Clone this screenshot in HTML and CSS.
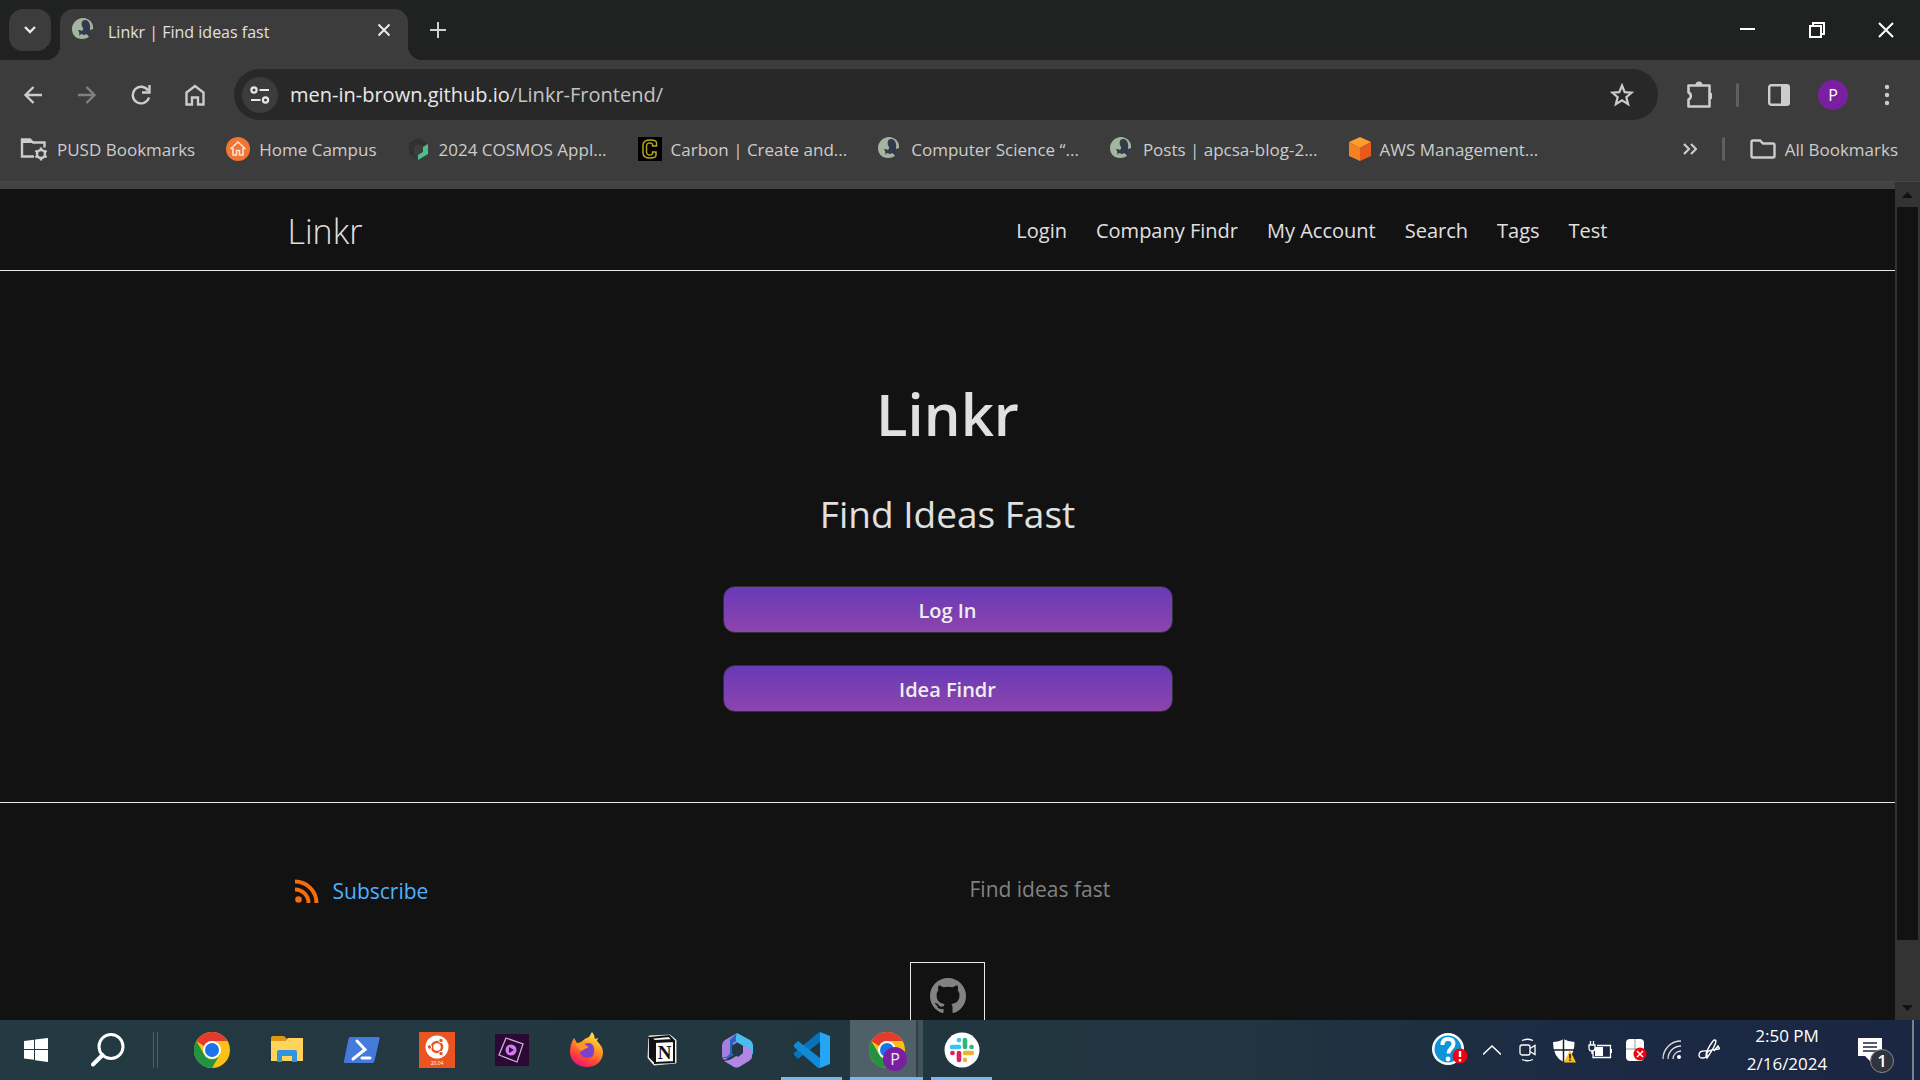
FILE: index.html
```html
<!DOCTYPE html>
<html lang="en">
<head>
<meta charset="utf-8">
<title>Linkr | Find ideas fast</title>
<link rel="stylesheet" href="styles.css">
</head>
<body>
<svg width="0" height="0" class="defs" aria-hidden="true">
  <symbol id="globe" viewBox="0 0 24 24">
    <path fill="#a3b5a1" d="M11 0C5 0 0 5 0 11c0 6 4 10 10 10 3 0 5-1 7-2l-2-3-3 1-3-1-2 2c1-3 0-4-1-6l4 1c2-1 1-3 0-5-1-3 0-6 3-6 4 1 5 6 5 10l3-1C22 5 17 0 11 0z"/>
    <path fill="#313b50" d="M13 2c4 0 6 5 5 9-1 2-1 3 1 6l4 5-6-4-4-3-3 1-4-4 4 1c2-1 2-3 1-5 0-3 0-5 2-6z"/>
  </symbol>
  <symbol id="chrome" viewBox="0 0 36 36">
    <circle cx="18" cy="18" r="18" fill="#fbc116"/>
    <path fill="#e33b2e" d="M2.400 9A18 18 0 0 1 33.600 9H18a9 9 0 0 0-8 5z"/>
    <path fill="#229342" d="M2.400 9A18 18 0 0 0 18 36l8-13.500a9 9 0 0 1-15.800 0z"/>
    <circle cx="18" cy="18" r="9" fill="#fff"/><circle cx="18" cy="18" r="7" fill="#1a73e8"/>
  </symbol>
</svg>

<header class="browser">
  <div class="tabstrip">
    <button class="tab-search" aria-label="Search tabs"><svg width="14" height="10" viewBox="0 0 14 10"><path d="M2 2l5 5 5-5" fill="none" stroke="#e8e8e8" stroke-width="2.400"/></svg></button>
    <div class="tab">
      <svg width="24" height="24"><use href="#globe"/></svg>
      <span class="tab-title">Linkr | Find ideas fast</span>
      <button class="plain" aria-label="Close tab"><svg width="14" height="14" viewBox="0 0 14 14"><path d="M1.500 1.500l11 11m0-11l-11 11" stroke="#e8e8e8" stroke-width="2"/></svg></button>
    </div>
    <button class="plain new-tab" aria-label="New tab"><svg width="16" height="16" viewBox="0 0 16 16"><path d="M8 0v16M0 8h16" stroke="#d0d0d0" stroke-width="2"/></svg></button>
    <div class="window-buttons">
      <button class="plain" aria-label="Minimize"><svg width="16" height="16" viewBox="0 0 16 16"><path d="M0 7h15" stroke="#fff" stroke-width="2"/></svg></button>
      <button class="plain" aria-label="Restore"><svg width="16" height="16" viewBox="0 0 16 16"><path d="M1 4h11v11H1zM4 4V1h11v11h-3" fill="none" stroke="#fff" stroke-width="2"/></svg></button>
      <button class="plain" aria-label="Close"><svg width="16" height="16" viewBox="0 0 16 16"><path d="M1 1l14 14m0-14L1 15" stroke="#fff" stroke-width="2"/></svg></button>
    </div>
  </div>

  <div class="toolbar">
    <nav class="history" aria-label="History">
      <button class="plain" aria-label="Back"><svg width="20" height="20" viewBox="0 0 20 20"><path d="M19 10H3m7.500-8L2.500 10l8 8" fill="none" stroke="#ccc" stroke-width="2.400"/></svg></button>
      <button class="plain" aria-label="Forward"><svg width="20" height="20" viewBox="0 0 20 20"><path d="M1 10h16M9.500 2l8 8-8 8" fill="none" stroke="#808080" stroke-width="2.400"/></svg></button>
      <button class="plain" aria-label="Reload"><svg width="20" height="20" viewBox="0 0 20 20"><path d="M18 12.500A8.300 8.300 0 1 1 17 5.500M18.500 0v7.500H11" fill="none" stroke="#ccc" stroke-width="2.400"/></svg></button>
      <button class="plain" aria-label="Home"><svg width="20" height="22" viewBox="0 0 20 22"><path d="M1.500 8.500L10 2l8.500 6.500v12h-5.500v-7H7v7H1.500z" fill="none" stroke="#ccc" stroke-width="2.400"/></svg></button>
    </nav>
    <div class="omnibox">
      <button class="site-info" aria-label="Site information"><svg width="20" height="18" viewBox="0 0 20 18"><g fill="none" stroke="#e8e8e8" stroke-width="2.200"><circle cx="4" cy="4" r="2.600"/><path d="M9.500 4H19M1 14h9.500"/><circle cx="15.500" cy="14" r="2.600"/></g></svg></button>
      <div class="url" role="textbox" aria-label="Address">men-in-brown.github.io<span>/Linkr-Frontend/</span></div>
      <button class="plain" aria-label="Bookmark this page"><svg width="24" height="24" viewBox="0 0 24 24"><path d="M12 2.500l2.700 6.600 7 .5-5.400 4.500 1.800 7L12 17.300l-6.100 3.800 1.800-7-5.400-4.500 7-.5z" fill="none" stroke="#ccc" stroke-width="2.200"/></svg></button>
    </div>
    <div class="tools">
      <button class="plain" aria-label="Extensions"><svg width="26" height="28" viewBox="0 0 26 28"><path d="M2.500 4.500h21v21h-21v-7a3.800 3.800 0 0 0 0-7z" fill="none" stroke="#ccc" stroke-width="2.600" stroke-linejoin="round" class="puzzle"/><path d="M9.500 4a3.500 3.500 0 0 1 7 0zM23.500 11.500a3.500 3.500 0 0 1 0 7z" fill="#ccc"/></svg></button>
      <i class="divider"></i>
      <button class="plain" aria-label="Side panel"><svg width="22" height="22" viewBox="0 0 22 22"><rect x="1.200" y="1.200" width="19.600" height="19.600" rx="2" fill="none" stroke="#ccc" stroke-width="2.400"/><path d="M13 1h8v20h-8z" fill="#ccc"/></svg></button>
      <button class="avatar" aria-label="Profile">P</button>
      <button class="plain" aria-label="Menu"><svg width="6" height="22" viewBox="0 0 6 22" fill="#ccc"><circle cx="3" cy="3" r="2.200"/><circle cx="3" cy="11" r="2.200"/><circle cx="3" cy="19" r="2.200"/></svg></button>
    </div>
  </div>

  <nav class="bookmarks" aria-label="Bookmarks">
    <a href="#"><svg width="28" height="24" viewBox="0 0 28 24"><path d="M14 19.500H2v-17h8l3 3h11.500v5" fill="none" stroke="#ccc" stroke-width="2.400"/><path d="M2 2h8l3 4H2z" fill="#ccc"/><circle cx="21" cy="17" r="4" fill="none" stroke="#ccc" stroke-width="2.400"/><path d="M21 10.500v3m0 7v3m-5.600-9.700l2.500 1.500m6.200 3.500l2.500 1.500m0-6.500l-2.500 1.500m-6.200 3.500l-2.500 1.500" stroke="#ccc" stroke-width="2.400"/></svg><span>PUSD Bookmarks</span></a>
    <a href="#"><svg width="24" height="24" viewBox="0 0 24 24"><circle cx="12" cy="12" r="12" fill="#f27535"/><path d="M4.500 12L12 5l7.500 7M7 11v7h3.500v-4.500h3V18H17v-7" fill="none" stroke="#ffe5d5" stroke-width="1.500"/></svg><span>Home Campus</span></a>
    <a href="#"><svg width="22" height="24" viewBox="0 0 22 24"><path d="M10 1l9 5-4 3-5-2-4 3v7l4 5-9-5V6z" fill="#2f3232"/><path d="M20 7v10l-10 6v-5l5-3v-5z" fill="#4ac18b"/></svg><span>2024 COSMOS Appl...</span></a>
    <a href="#"><svg width="24" height="24" viewBox="0 0 24 24"><path d="M0 0h24v24H0z"/><path d="M18.500 9V6c0-2-3-3-6-3C7 3 5 5 5 8v8c0 3 2 5 7 5 3 0 6-1 6-3v-3h-3.500v2c-3 2-6 1-6-2V9c0-3 3-4 6-2v2z" fill="none" stroke="#b5a51c" stroke-width="1.500"/></svg><span>Carbon | Create and...</span></a>
    <a href="#"><svg width="24" height="24"><use href="#globe"/></svg><span>Computer Science “...</span></a>
    <a href="#"><svg width="24" height="24"><use href="#globe"/></svg><span>Posts | apcsa-blog-2...</span></a>
    <a href="#"><svg width="22" height="24" viewBox="0 0 22 24"><path d="M11 0l11 5-11 6L0 5z" fill="#ff9f2e"/><path d="M0 5l11 6v13L0 19z" fill="#f58220"/><path d="M22 5l-11 6v13l11-5z" fill="#e85b1c"/></svg><span>AWS Management...</span></a>
    <div class="bookmarks-end">
      <button class="plain" aria-label="More bookmarks"><svg width="14" height="12" viewBox="0 0 14 12"><path d="M1 1l5 5-5 5m7-10l5 5-5 5" fill="none" stroke="#ccc" stroke-width="2.200"/></svg></button>
      <i class="divider"></i>
      <a href="#"><svg width="26" height="20" viewBox="0 0 26 20"><path d="M3 1.500h7l3 3h10q1.500 0 1.500 1.500v11q0 1.500-1.500 1.500H3q-1.500 0-1.500-1.500V3q0-1.500 1.500-1.500z" fill="none" stroke="#ccc" stroke-width="2.400"/></svg><span>All Bookmarks</span></a>
    </div>
  </nav>
</header>

<div class="viewport">
  <div class="page">
    <header class="site-header">
      <div class="wrap">
        <a class="site-title" href="#">Linkr</a>
        <nav class="site-nav"><a href="#">Login</a><a href="#">Company Findr</a><a href="#">My Account</a><a href="#">Search</a><a href="#">Tags</a><a href="#">Test</a></nav>
      </div>
    </header>
    <main class="hero">
      <h1>Linkr</h1>
      <p>Find Ideas Fast</p>
      <button class="cta">Log In</button>
      <button class="cta">Idea Findr</button>
    </main>
    <footer class="site-footer">
      <div class="wrap footer-cols">
        <a class="subscribe" href="#"><svg width="24" height="24" viewBox="0 0 24 24" fill="none" stroke="#f76b0c" stroke-width="4"><circle cx="3.500" cy="20.500" r="3.300" fill="#f76b0c" stroke="none"/><path d="M0 10.500A13.500 13.500 0 0 1 13.500 24M0 2.500A21.500 21.500 0 0 1 21.500 24"/></svg>Subscribe</a>
        <p>Find ideas fast</p>
      </div>
      <a class="github" href="#" aria-label="GitHub"><svg width="36" height="36" viewBox="0 0 16 16"><path fill="#828282" d="M8 0C3.580 0 0 3.580 0 8c0 3.540 2.290 6.530 5.470 7.590.4.070.55-.17.55-.38 0-.19-.01-.82-.01-1.490-2.010.37-2.530-.49-2.690-.94-.09-.23-.48-.94-.82-1.130-.28-.15-.68-.52-.01-.53.63-.01 1.080.58 1.230.82.72 1.210 1.870.87 2.330.66.070-.52.28-.87.51-1.070-1.780-.2-3.640-.89-3.640-3.950 0-.87.31-1.590.82-2.150-.08-.2-.36-1.020.08-2.120 0 0 .67-.21 2.200.82.64-.18 1.320-.27 2-.27s1.360.09 2 .27c1.530-1.040 2.200-.82 2.200-.82.44 1.100.16 1.920.08 2.120.51.56.82 1.270.82 2.150 0 3.070-1.870 3.750-3.650 3.950.29.25.54.73.54 1.480 0 1.070-.01 1.930-.01 2.200 0 .21.15.46.55.38A8.010 8.010 0 0 0 16 8c0-4.420-3.580-8-8-8z"/></svg></a>
    </footer>
  </div>
  <div class="scrollbar" aria-hidden="true">
    <svg width="25" height="25" viewBox="0 0 25 25"><path d="M7 16h11l-5.500-6z" fill="#111"/></svg>
    <div class="track"><i class="thumb"></i></div>
    <svg width="25" height="25" viewBox="0 0 25 25"><path d="M7 10h11l-5.500 6z" fill="#111"/></svg>
  </div>
</div>

<footer class="taskbar">
  <button class="task start" aria-label="Start"><svg width="24" height="24" viewBox="0 0 24 24" fill="#fff"><path d="M0 3l10-1.300V11H0zM11 1.600L24 0v11H11zM0 12h10v9.800L0 20.500zM11 12h13v12l-13-1.700z"/></svg></button>
  <button class="task search" aria-label="Search"><svg width="34" height="34" viewBox="0 0 34 34"><circle cx="20" cy="13.500" r="12" fill="none" stroke="#fff" stroke-width="3"/><path d="M11.500 22L2 31.500" stroke="#fff" stroke-width="4" stroke-linecap="round"/></svg></button>
  <i class="grip"></i>
  <div class="apps">
    <button class="task" aria-label="Chrome"><svg width="36" height="36"><use href="#chrome"/></svg></button>
    <button class="task" aria-label="File Explorer"><svg width="32" height="28" viewBox="0 0 32 28"><path d="M0 6V2q0-2 2-2h11l3 3-3 3z" fill="#dd9a0c"/><path d="M0 5h14l3-3h15v23H0z" fill="#ffd35c"/><path d="M6 26V16q0-2 2-2h16q2 0 2 2v10h-5v-6H11v6z" fill="#3195dc"/></svg></button>
    <button class="task" aria-label="PowerShell"><svg width="36" height="28" viewBox="0 0 36 28"><path d="M6 1h28q2 0 1.500 2l-5 22q-.5 2-2 2H1q-1.500 0-1-2l4.500-22Q5 1 6 1z" fill="#447adb"/><path d="M13 5l8 8.500L9 23M18 22h8" fill="none" stroke="#fff" stroke-width="3" stroke-linecap="round"/></svg></button>
    <button class="task" aria-label="Ubuntu"><svg width="36" height="36" viewBox="0 0 36 36"><path d="M0 0h36v36H0z" fill="#e95420"/><circle cx="18" cy="15" r="11.500" fill="#fff"/><circle cx="18" cy="15" r="5" fill="none" stroke="#e95420" stroke-width="2.500"/><g fill="#e95420" stroke="#fff"><circle cx="10.500" cy="15" r="2.200"/><circle cx="22" cy="8.500" r="2.200"/><circle cx="22" cy="21.500" r="2.200"/></g><text x="18" y="33" font-size="5" text-anchor="middle" fill="#fff">20.04</text></svg></button>
    <button class="task" aria-label="Video editor"><svg width="34" height="34" viewBox="0 0 34 34"><path d="M0 1h34v32H0z" fill="#2a0a33"/><path d="M11 5l17 6-6 18-18-7z" fill="none" stroke="#d6a8df" stroke-width="1.300"/><circle cx="16" cy="17" r="5.500" fill="#d47bf0"/><path d="M14 14l5 3-5 3z" fill="#2a0a33"/></svg></button>
    <button class="task" aria-label="Firefox"><svg width="36" height="36" viewBox="0 0 36 36"><defs><linearGradient id="fx" x1=".8" y1="0" x2=".3" y2="1"><stop offset="0" stop-color="#fff44f"/><stop offset=".4" stop-color="#ff9a22"/><stop offset=".75" stop-color="#ff4338"/><stop offset="1" stop-color="#e4127f"/></linearGradient></defs><path d="M5 6l3 5 4-1q4-4 8-5l3-5q2 2 3 7l3-1-1 3q6 6 6 11c0 9-7 15-16 15S1 29 1 20C1 15 2 11 5 6z" fill="url(#fx)"/><path d="M13 13q10-5 12 3c1 7-2 10-7 10q-7-1-7-6l5-3 4-2z" fill="#7942cf"/><path d="M6 12q8-3 13 3-5 2-7 4l-4-4z" fill="#ff9428"/></svg></button>
    <button class="task" aria-label="Notion"><svg width="32" height="32" viewBox="0 0 32 32"><path d="M3 2L24 1l6 5v23L8 31 2 24z" fill="#fff" stroke="#ddd"/><path d="M4 4l19-2 4 4L9 7zM4 5l4 4v18l-4-4zM9 8l19-1v21L9 29z" fill="#fff" stroke="#111" stroke-width="2"/><path d="M4 5l4 3v20l-4-5z" fill="#111"/><text x="18.500" y="25" font-size="19" font-weight="700" text-anchor="middle" font-family="Liberation Serif, serif" fill="#111">N</text></svg></button>
    <button class="task" aria-label="Microsoft 365"><svg width="32" height="36" viewBox="0 0 32 36"><path d="M16 1L4 8q-3 2-3 5v11q0 3 3 4l8-5V13l10-6z" fill="#a87de0"/><path d="M1 25q3 3 10-1l5-4-4-3v-6l10-7-6-3q-4 4-7 7v13q-2 5-8 4z" fill="#2367b8"/><path d="M16 1l13 7q3 2 3 5v10q-3-7-10-9l-5-3q-4-3-1-10z" fill="#49bdf0"/><path d="M31 20v5q0 2-3 4l-10 6q-2 1-5 0L3 29q5 0 9-3l9-6 1-6q8 1 9 6z" fill="#b186e5"/><path d="M11 14l6-3 5 3v7l-5 4-6-4z" fill="#22384a"/></svg></button>
    <button class="task open" aria-label="Visual Studio Code"><svg width="36" height="36" viewBox="0 0 36 36"><path d="M26 0v10L4 27l-4-4v-2L24 1z" fill="#0873b8"/><path d="M0 13l4-4 22 17v10h-2L0 15z" fill="#118bd5"/><path d="M26 0l10 4v28l-10 4z" fill="#26a5f2"/></svg></button>
    <button class="task open active" aria-label="Chrome, profile P"><svg width="36" height="36"><use href="#chrome"/></svg><span class="badge">P</span></button>
    <button class="task open" aria-label="Slack"><svg width="36" height="36" viewBox="0 0 36 36"><circle cx="18" cy="18" r="17.500" fill="#fff"/><g stroke-width="4.600" stroke-linecap="round"><path d="M8 15h7M15 8v.1" stroke="#36c5f0"/><path d="M21 8v7M27.500 15h.1" stroke="#2eb67d"/><path d="M21 21h7M21 28v-.1" stroke="#ecb22e"/><path d="M15 21v7M8.500 21h-.1" stroke="#e01e5a"/></g></svg></button>
  </div>
  <div class="tray">
    <button class="plain help" aria-label="Help"><svg width="36" height="34" viewBox="0 0 36 34"><circle cx="16" cy="16" r="16" fill="#fff"/><circle cx="16" cy="16" r="13.500" fill="#0d94d8"/><path d="M10.500 12q0-6 5.500-6t5.500 5c0 4-5 4.500-5 9.500" fill="none" stroke="#fff" stroke-width="4"/><circle cx="16" cy="26" r="2.400" fill="#fff"/><circle cx="28" cy="23" r="7.500" fill="#f00010"/><path d="M28 18v6m0 2v2.500" stroke="#fff" stroke-width="2.400"/></svg></button>
    <button class="plain" aria-label="Show hidden icons"><svg width="18" height="10" viewBox="0 0 18 10"><path d="M0 9.500L9 1l9 8.500" fill="none" stroke="#fff" stroke-width="1.500"/></svg></button>
    <button class="plain" aria-label="Meet now"><svg width="18" height="24" viewBox="0 0 18 24"><g fill="none" stroke="#fff" stroke-width="1.300"><rect x="1" y="7" width="10" height="10" rx="2"/><path d="M11 10.500l5-3v9l-5-3M3 2.500q5-2.500 11 0M3 21.500q5 2.500 11 0"/></g></svg></button>
    <button class="plain" aria-label="Security"><svg width="24" height="25" viewBox="0 0 24 25"><path d="M11.500 1q5 3 11 3 0 15-11 20Q1 19 1 4q6 0 10.500-3z" fill="#fff"/><path d="M11.500 1v23M1 12h22" stroke="#18202c" stroke-width="1.500"/><path d="M18 12l6 12.500H12z" fill="#fbbd14"/><path d="M18 16v4.500m0 1v1.500" stroke="#111" stroke-width="1.500"/></svg></button>
    <button class="plain" aria-label="Battery"><svg width="24" height="18" viewBox="0 0 24 18"><path d="M9 4.500h13.500v12H5v-6M4 10v3M1 4h6v3q0 3-3 3T1 7zM2.500 0v4m3-4v4" fill="none" stroke="#fff" stroke-width="1.300"/><path d="M7 6h8v9H7zM23 8h1v4h-1z" fill="#fff"/></svg></button>
    <button class="plain" aria-label="Mouse"><svg width="22" height="25" viewBox="0 0 22 25"><rect x="1" y="1" width="18" height="22" rx="4" fill="#fff"/><path d="M10 1v11M1 11h18" stroke="#999"/><circle cx="15" cy="16" r="6.500" fill="#f00010"/><path d="M12 13l6 6m0-6l-6 6" stroke="#fff" stroke-width="1.500"/></svg></button>
    <button class="plain" aria-label="Network"><svg width="20" height="20" viewBox="0 0 20 20"><g fill="none" stroke="#ddd" stroke-width="1.300"><path d="M1 19A18 18 0 0 1 19 1M6 19A13 13 0 0 1 19 6M11 19a8 8 0 0 1 8-8"/></g><circle cx="17" cy="17" r="2" fill="#fff"/></svg></button>
    <button class="plain pen" aria-label="Windows Ink"><svg width="22" height="22" viewBox="0 0 22 22"><path d="M8 17c0-4 4-11 7-15q2-2 3 0 0 4-9 17zM9 12q-8-1-8 4c0 5 8 3 8 0q-1-4 5-5t7-1-1-3l-4 5" fill="none" stroke="#fff" stroke-width="1.400"/></svg></button>
    <time class="clock"><span>2:50 PM</span><span>2/16/2024</span></time>
    <button class="plain notes" aria-label="Notifications"><svg width="24" height="24" viewBox="0 0 24 24"><path d="M0 0h24v18H13v6l-6-6H0z" fill="#fff"/><path d="M5 5h14M5 9h14M5 13h14" stroke="#1b2943" stroke-width="1.300"/></svg><span class="count">1</span></button>
    <i class="show-desktop"></i>
  </div>
</footer>
</body>
</html>
```
FILE: styles.css
```css
* { box-sizing: border-box; }
body {
  margin: 0;
  height: 100vh;
  display: flex;
  flex-direction: column;
  overflow: hidden;
  background: #121212;
  color: #e0e0e0;
  font-family: "Open Sans", "Noto Sans", sans-serif;
  font-size: 20px;
}
.defs { position: absolute; }
svg { display: block; flex: none; }
a { color: inherit; text-decoration: none; }
button { font: inherit; color: inherit; border: 0; padding: 0; cursor: pointer; }
.plain { background: none; display: grid; place-items: center; }

/* Browser chrome */
.browser { flex: none; background: #3c3c3c; border-bottom: 7px solid #434343; }
.tabstrip { height: 60px; display: flex; align-items: flex-start; padding: 9px 0 0 9px; background: #202221; }
.tab-search { width: 42px; height: 42px; border-radius: 14px; background: #3c3c3c; display: grid; place-items: center; }
.tab {
  position: relative;
  width: 348px;
  height: 51px;
  margin-left: 9px;
  padding: 0 17px 9px 12px;
  display: flex;
  align-items: center;
  border-radius: 14px 14px 0 0;
  background: #3c3c3c;
}
.tab::before, .tab::after { content: ""; position: absolute; bottom: 0; width: 14px; height: 14px; }
.tab::before { right: 100%; background: radial-gradient(circle at 0 0, #202221 14px, #3c3c3c 14px); }
.tab::after { left: 100%; background: radial-gradient(circle at 100% 0, #202221 14px, #3c3c3c 14px); }
.tab-title { flex: 1; margin-left: 12px; padding-top: 4px; font-size: 16px; line-height: 20px; }
.new-tab { width: 60px; height: 42px; }
.window-buttons { margin-left: auto; display: flex; }
.window-buttons .plain { width: 69px; height: 42px; }

.toolbar { height: 60px; display: flex; align-items: center; padding-top: 9px; }
.history { display: flex; padding: 0 12px 0 6px; }
.history .plain { width: 54px; height: 40px; }
.omnibox { flex: 1; height: 51px; border-radius: 26px; padding: 0 24px 0 8px; display: flex; align-items: center; background: #282828; }
.site-info { width: 36px; height: 36px; border-radius: 50%; background: #3c3c3c; display: grid; place-items: center; }
.url { flex: 1; margin-left: 12px; font-size: 20px; color: #e8e8e8; white-space: nowrap; }
.url span { color: #c4c4c4; }
.tools { display: flex; align-items: center; padding: 0 30px 0 28px; }
.divider { width: 3px; height: 24px; border-radius: 2px; background: #5f5f5f; }
.tools .divider { margin: 0 29px 0 24px; }
.avatar { width: 30px; height: 30px; margin: 0 36px 0 28px; border-radius: 50%; background: #7b1fa2; color: #fff; font-size: 16px; }

.bookmarks { height: 62px; padding: 0 22px 3px 20px; display: flex; align-items: center; gap: 31px; border-bottom: 1px solid #484848; font-size: 17px; color: #ccc; white-space: nowrap; }
.bookmarks a { display: flex; align-items: center; gap: 9px; }
.bookmarks-end { margin-left: auto; display: flex; align-items: center; gap: 25px; }

/* Page */
.viewport { flex: 1; min-height: 0; display: flex; }
.page { flex: 1; overflow: hidden; }
.wrap { max-width: 1320px; margin: 0 auto; display: flex; }
.site-header { border-bottom: 1px solid #e8e8e8; }
.site-header .wrap { height: 81px; padding-top: 2px; align-items: center; justify-content: space-between; }
.site-title { font-size: 34px; font-weight: 300; }
.site-nav { display: flex; gap: 29px; }
.hero { display: flex; flex-direction: column; align-items: center; padding: 101px 0 90px; border-bottom: 1px solid #e8e8e8; }
.hero h1 { margin: 0; font-size: 58px; line-height: 84px; font-weight: 600; }
.hero p { margin: 30px 0 44px; font-size: 37px; line-height: 56px; }
.cta { width: 450px; height: 47px; padding-top: 2px; border: 1px solid #333; border-radius: 12px; background: linear-gradient(#673ab7, #8e44ad); color: #eee; font-weight: 600; }
.cta + .cta { margin-top: 32px; }
.site-footer { padding-top: 70px; color: #828282; font-size: 21px; }
.footer-cols { display: grid; grid-template-columns: 682px 1fr; }
.footer-cols p { margin: 0; line-height: 32px; }
.subscribe { display: flex; align-items: center; gap: 14px; padding: 4px 0 0 7px; color: #4db1ff; }
.github { width: 75px; height: 68px; margin: 57px auto 0; display: grid; place-items: center; border: 1px solid #e8e8e8; }

.scrollbar { width: 25px; flex: none; display: flex; flex-direction: column; margin-top: -7px; background: #333; }
.track { flex: 1; padding: 0 2px; }
.thumb { display: block; height: 93%; background: #121212; }

/* Taskbar */
.taskbar { flex: none; height: 60px; display: flex; background: linear-gradient(90deg, #243a42, #21343f 65%, #1b2944 85%, #1b2742); }
.task { position: relative; background: none; display: grid; place-items: center; }
.start { width: 72px; }
.search { width: 72px; }
.grip { width: 5px; height: 36px; margin: 12px 16px 0 9px; border: solid #4d6068; border-width: 0 1px; }
.apps { display: flex; }
.apps .task { width: 75px; }
.open::after { content: ""; position: absolute; bottom: 0; left: 7px; right: 7px; height: 3px; background: #76b9ed; }
.apps .active { background: linear-gradient(90deg, #4f6069 66px, #333f45 66px 68px, #42525b 68px); width: 73px; margin: 0 1px; }
.active::after { left: 0; right: 0; }
.badge { position: absolute; left: 33px; top: 27px; width: 24px; height: 24px; border-radius: 50%; background: #7b1fa2; color: #eee; font-size: 16px; line-height: 24px; }
.tray { margin-left: auto; display: flex; align-items: center; }
.tray .plain { width: 36px; height: 60px; }
.tray .help { width: 48px; }
.tray .pen { width: 38px; }
.clock { width: 118px; display: grid; justify-items: center; font-size: 17px; line-height: 28px; color: #fff; }
.tray .notes { position: relative; width: 48px; }
.count { position: absolute; left: 24px; top: 29px; width: 24px; height: 24px; border: 1px solid #888; border-radius: 50%; background: #30343c; color: #fff; font-size: 17px; font-weight: 600; line-height: 22px; text-align: center; }
.show-desktop { width: 8px; height: 60px; margin-left: 18px; border-left: 2px solid #77808f; }
```
